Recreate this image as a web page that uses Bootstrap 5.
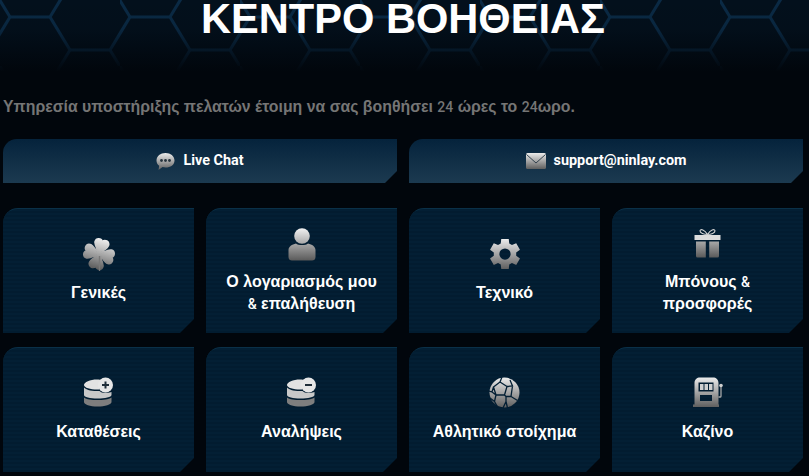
<!DOCTYPE html>
<html lang="el">
<head>
    <meta charset="UTF-8">
    <meta name="viewport" content="width=device-width, initial-scale=1.0">
    <title>Κέντρο Βοήθειας</title>
    <link href="https://cdn.jsdelivr.net/npm/bootstrap@5.3.0/dist/css/bootstrap.min.css" rel="stylesheet">
    <style>
        html, body { height: 476px; overflow: hidden; }
        body { background: #01060c; font-family: "Liberation Sans", Arial, sans-serif; color: #fff; }
        .hex-bg { position: absolute; top: 0; left: 0; z-index: 0; }
        .help-page { position: relative; z-index: 1; padding: 0 6px 0 3px; }
        .help-title { font-size: 41.6px; font-weight: 700; line-height: 37px; margin: 0; padding-bottom: 60px; text-align: center; font-family: "Liberation Sans", Arial, sans-serif; }
        .help-sub { font-size: 15.85px; font-weight: 700; line-height: 20px; color: #757575; margin: 0 0 22px; }
        .latin-run { font-family: Roboto, sans-serif; font-size: 14px; font-weight: 500; }
        .top-links { display: grid; grid-template-columns: 1fr 1fr; gap: 12px; margin-bottom: 25px; }
        .top-link {
            height: 44px; color: #fff; text-decoration: none; font-family: Roboto, sans-serif; font-weight: 700; font-size: 14.4px;
            background: linear-gradient(#05233c, #1c3a50);
            border-top-left-radius: 14px;
            clip-path: polygon(0 0, 100% 0, 100% calc(100% - 12px), calc(100% - 12px) 100%, 0 100%);
        }
        .topic-grid { display: grid; grid-template-columns: repeat(4, 1fr); column-gap: 12px; row-gap: 14px; }
        .topic-card {
            height: 125px; color: #fff; text-decoration: none; font-size: 16px; font-weight: 700; line-height: 22px; text-align: center;
            background: repeating-linear-gradient(#031f34 0, #031f34 2px, #021c30 2px, #021c30 4px);
            border-top: 1px solid #0a3048;
            border-top-left-radius: 15px;
            clip-path: polygon(0 0, 100% 0, 100% calc(100% - 14px), calc(100% - 14px) 100%, 0 100%);
            padding: 0 8px;
        }
        .topic-card svg { margin-bottom: 10px; flex-shrink: 0; }
    </style>
</head>
<body>
<svg class="hex-bg" width="809" height="90">
    <defs>
        <linearGradient id="metal" x1="0" y1="0" x2="0" y2="1">
            <stop offset="0" stop-color="#ececec"/>
            <stop offset="1" stop-color="#5f5f5f"/>
        </linearGradient>
        <linearGradient id="metaldark" x1="0" y1="0" x2="0" y2="1">
            <stop offset="0" stop-color="#a8a8a8"/>
            <stop offset="1" stop-color="#5a5a5a"/>
        </linearGradient>
        <linearGradient id="metallight" x1="0" y1="0" x2="0" y2="1">
            <stop offset="0" stop-color="#f2f2f2"/>
            <stop offset="1" stop-color="#a8a8a8"/>
        </linearGradient>
        <linearGradient id="hexfade" x1="0" y1="0" x2="0" y2="1">
            <stop offset="0" stop-color="#01060c" stop-opacity="0"/>
            <stop offset=".4" stop-color="#01060c" stop-opacity=".1"/>
            <stop offset="1" stop-color="#01060c"/>
        </linearGradient>
        <pattern id="hexes" width="120" height="66" patternUnits="userSpaceOnUse">
            <path d="M10 17H50L70 50H110L130 83M50 17L70 -16M10 17L-10 50L-30 83M-10 -16L10 17M70 50L50 83M110 50L130 17" fill="none" stroke="#0a2a45" stroke-width="3"/>
        </pattern>
    </defs>
    <rect width="809" height="90" fill="#03101c"/>
    <rect width="809" height="90" fill="url(#hexes)"/>
    <rect width="809" height="72" fill="url(#hexfade)"/>
    <rect y="71" width="809" height="19" fill="#01060c"/>
</svg>

<div class="help-page">
    <h1 class="help-title">ΚΕΝΤΡΟ ΒΟΗΘΕΙΑΣ</h1>
    <p class="help-sub">Υπηρεσία υποστήριξης πελατών έτοιμη να σας βοηθήσει <span class="latin-run">24</span> ώρες το <span class="latin-run">24</span>ωρο.</p>

    <div class="top-links">
        <a href="#" class="top-link d-flex align-items-center justify-content-center gap-2">
            <svg width="19" height="19" viewBox="0 0 19 19"><path fill="url(#metal)" d="M9.5 1C14.5 1 18.5 4 18.5 8.5S14.5 15.5 9.5 15.5C8.5 15.5 7.5 15.4 6.6 15.1L2.5 18L3.2 13.8C1.4 12.5.5 10.7.5 8.5.5 4 4.5 1 9.5 1Z"/><circle cx="5.5" cy="8.5" r="1.4" fill="#27343e"/><circle cx="9.5" cy="8.5" r="1.4" fill="#27343e"/><circle cx="13.5" cy="8.5" r="1.4" fill="#27343e"/></svg>
            <span>Live Chat</span>
        </a>
        <a href="#" class="top-link d-flex align-items-center justify-content-center gap-2">
            <svg width="20" height="16" viewBox="0 0 20 16"><rect width="20" height="16" rx="1.500" fill="url(#metal)"/><path d="M.5 1.500 10 10 19.500 1.500" fill="none" stroke="#33424d" stroke-width="1"/></svg>
            <span>support@ninlay.com</span>
        </a>
    </div>

    <div class="topic-grid">
        <a href="#" class="topic-card d-flex flex-column align-items-center justify-content-center">
            <svg width="34" height="34" viewBox="0 0 34 34"><path transform="rotate(15 17 16)" fill="url(#metal)" stroke="url(#metal)" stroke-width="1.500" d="M17 16C15 12 10 9 10 5C10 1 15 0 17 3C19 0 24 1 24 5C24 9 19 12 17 16ZM17 16C21 14 24 9 28 9C32 9 33 14 30 16C33 18 32 23 28 23C24 23 21 18 17 16ZM17 16C19 20 24 23 24 27C24 31 19 32 17 29C15 32 10 31 10 27C10 23 15 20 17 16ZM17 16C13 18 10 23 6 23C2 23 1 18 4 16C1 14 2 9 6 9C10 9 13 14 17 16Z"/><path d="M17.500 18V33" stroke="#777" stroke-width="1.400"/></svg>
            <span>Γενικές</span>
        </a>
        <a href="#" class="topic-card d-flex flex-column align-items-center justify-content-center">
            <svg width="28" height="33" viewBox="0 0 28 33"><circle cx="14" cy="8" r="7.800" fill="url(#metallight)"/><path fill="url(#metaldark)" d="M8 15.500C10 17.500 18 17.500 20 15.500 24 16.500 27.500 18.500 27.500 22V29C27.500 31.500 26 32.500 24 32.500H4C2 32.500.5 31.500.5 29V22C.5 18.500 4 16.500 8 15.500Z"/></svg>
            <span>Ο λογαριασμός μου<br><span class="latin-run">&amp;</span> επαλήθευση</span>
        </a>
        <a href="#" class="topic-card d-flex flex-column align-items-center justify-content-center">
            <svg width="32" height="34" viewBox="0 0 34 36"><path fill="url(#metal)" fill-rule="evenodd" d="M13 1H21L21.500 5.900 24.400 7.500 28.900 5.500 32.900 12.400 28.900 15.300V18.700L32.900 21.600 28.900 28.500 24.400 26.500 21.500 28.100 21 33H13L12.500 28.100 9.600 26.500 5.100 28.500 1.100 21.600 5.100 18.700V15.300L1.100 12.400 5.100 5.500 9.600 7.500 12.500 5.900ZM23 17A6 6 0 1 0 11 17 6 6 0 1 0 23 17Z"/></svg>
            <span>Τεχνικό</span>
        </a>
        <a href="#" class="topic-card d-flex flex-column align-items-center justify-content-center">
            <svg width="27" height="33" viewBox="0 0 27 33"><path d="M13.500 6.500C10.500 1.500 6.500 .5 6 2.800 5.700 5 10 6.500 13.500 6.500C17 6.500 21.300 5 21 2.800 20.500 .5 16.500 1.500 13.500 6.500Z" fill="none" stroke="#cfcfcf" stroke-width="1.100"/><path fill="#dcdcdc" d="M.5 7H26.500V12H.5Z"/><path fill="url(#metaldark)" d="M2 13.500H11.800V29.500H3.500A1.500 1.500 0 0 1 2 28ZM15.200 13.500H25V28A1.500 1.500 0 0 1 23.500 29.500H15.200Z"/></svg>
            <span>Μπόνους <span class="latin-run">&amp;</span><br>προσφορές</span>
        </a>

        <a href="#" class="topic-card d-flex flex-column align-items-center justify-content-center">
            <svg width="31" height="34" viewBox="0 0 31 34"><path fill="#e2e2e2" d="M1 8C1 5 7 2.500 14 2.500 16 2.500 18 2.700 19 3A9 9 0 0 0 16.500 12.500C9 13 1 11 1 8Z"/><path fill="#c8c8c8" d="M1 10.500C4 13.500 9 14 16.500 14 18.500 16 22 16.500 28.500 15V18C28.500 20 22 21.500 14.500 21.500S1 20 1 18Z"/><path fill="#7e7e7e" d="M1 20.500C3.500 22.500 9 23 14.500 23S25.500 22.500 28.500 20.500V25C28.500 27.500 22 29.500 14.500 29.500S1 27.500 1 25Z"/><circle cx="22.500" cy="8" r="7.500" fill="#e6e6e6"/><path d="M22.500 4.500V11.500M19 8H26" stroke="#1f2d38" stroke-width="2"/></svg>
            <span>Καταθέσεις</span>
        </a>
        <a href="#" class="topic-card d-flex flex-column align-items-center justify-content-center">
            <svg width="31" height="34" viewBox="0 0 31 34"><path fill="#e2e2e2" d="M1 8C1 5 7 2.500 14 2.500 16 2.500 18 2.700 19 3A9 9 0 0 0 16.500 12.500C9 13 1 11 1 8Z"/><path fill="#c8c8c8" d="M1 10.500C4 13.500 9 14 16.500 14 18.500 16 22 16.500 28.500 15V18C28.500 20 22 21.500 14.500 21.500S1 20 1 18Z"/><path fill="#7e7e7e" d="M1 20.500C3.500 22.500 9 23 14.500 23S25.500 22.500 28.500 20.500V25C28.500 27.500 22 29.500 14.500 29.500S1 27.500 1 25Z"/><circle cx="22.500" cy="8" r="7.500" fill="#e6e6e6"/><path d="M19 8H26" stroke="#1f2d38" stroke-width="2"/></svg>
            <span>Αναλήψεις</span>
        </a>
        <a href="#" class="topic-card d-flex flex-column align-items-center justify-content-center">
            <svg width="31" height="34" viewBox="0 0 31 34"><circle cx="15.500" cy="15.500" r="15" fill="url(#metal)"/><path d="M11 5 18 9.500 15.500 18H7L4.500 10ZM11 5 13 0M18 9.500 23.500 9 21 3M23.500 9 22 19.500 28.500 23.500M22 19.500H17L15.500 18M17 19.500 17 24.500 14 31M17 24.500 18.500 31M7 18 5.500 24.500 8.500 30M5.500 24.500 1 21M4.500 10 3 15 0 14M3 15 7 18" fill="none" stroke="#031f34" stroke-width="1.300"/></svg>
            <span>Αθλητικό στοίχημα</span>
        </a>
        <a href="#" class="topic-card d-flex flex-column align-items-center justify-content-center">
            <svg width="30" height="34" viewBox="0 0 30 34"><path fill="url(#metal)" fill-rule="evenodd" d="M1.500 6C1.500 2.500 4 .5 7 .5H20C23 .5 25.500 2.500 25.500 6V27.500H26V30H0V27.500H1.500ZM5.500 5.500V14.500H20.500V5.500ZM7 18V24H19V18Z"/><path fill="#d0d0d0" d="M7 7H10.500V13H7ZM11.500 7H15V13H11.500ZM16 7H19.500V13H16Z"/><path d="M25.500 20H27.500C28 20 28 19.500 28 19V10" fill="none" stroke="#a8a8a8" stroke-width="1.300"/><circle cx="28" cy="8.500" r="1.800" fill="#cfcfcf"/></svg>
            <span>Καζίνο</span>
        </a>
    </div>
</div>

<script src="https://cdn.jsdelivr.net/npm/bootstrap@5.3.0/dist/js/bootstrap.bundle.min.js"></script>
</body>
</html>
